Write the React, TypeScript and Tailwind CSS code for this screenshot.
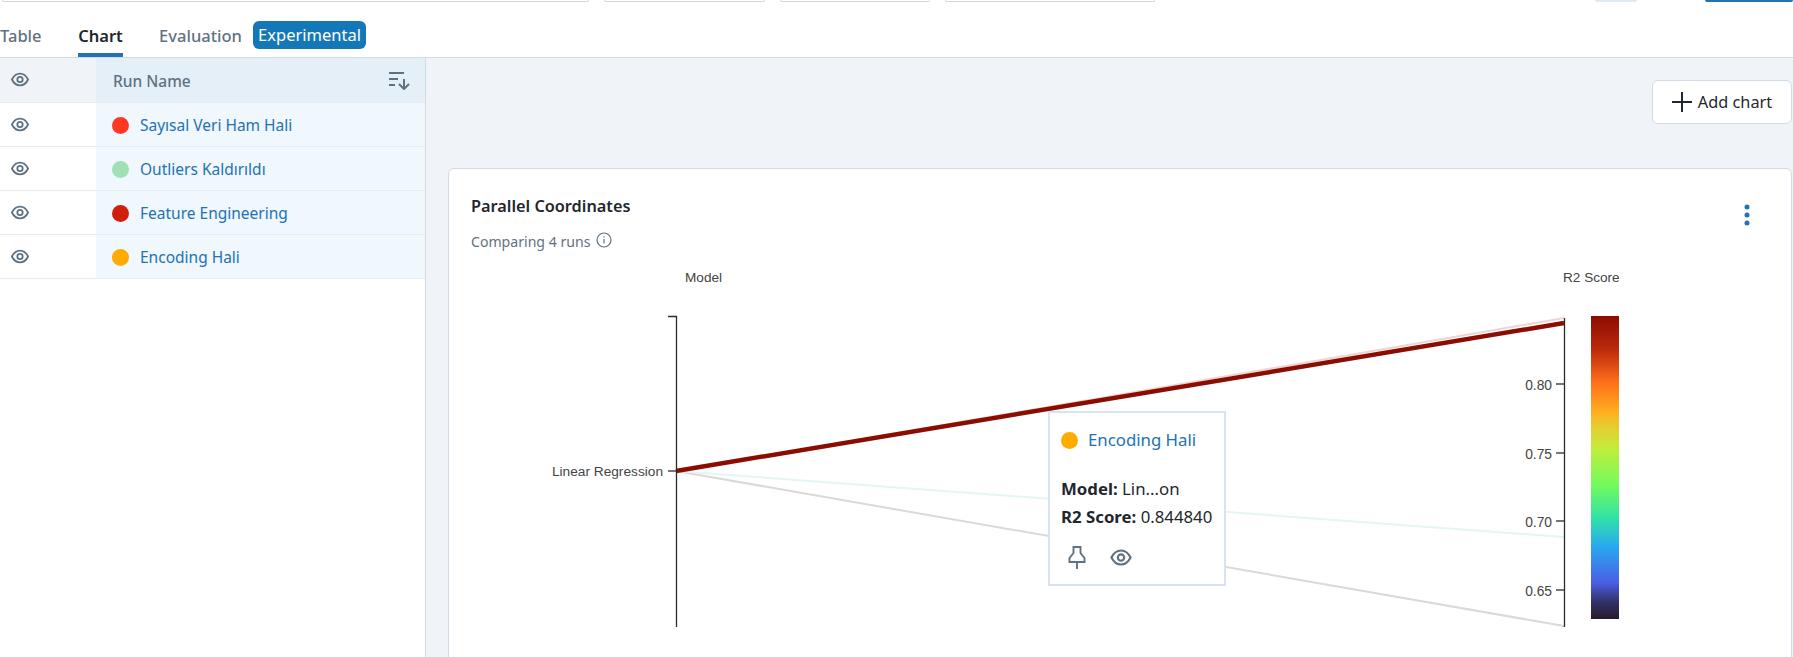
import React from "react";

const font = "font-['Noto_Sans','Open_Sans',sans-serif]";

function Eye({ className = "" }: { className?: string }) {
  return (
    <svg viewBox="0 0 20 16" className={className} fill="none" stroke="#5f7282" strokeWidth="2">
      <path d="M1 8C3 4 6 1.4 10 1.4S17 4 19 8c-2 4-5 6.6-9 6.6S3 12 1 8Z" />
      <circle cx="10" cy="8" r="3" />
    </svg>
  );
}

const runs = [
  { name: "Sayısal Veri Ham Hali", dot: "bg-[#ff3824]" },
  { name: "Outliers Kaldırıldı", dot: "bg-[#9fe0b4]" },
  { name: "Feature Engineering", dot: "bg-[#cf1f0a]" },
  { name: "Encoding Hali", dot: "bg-[#ffab00]" },
];

function Chart() {
  const ticks = [
    { y: 384, t: "0.80" },
    { y: 453, t: "0.75" },
    { y: 521, t: "0.70" },
    { y: 590, t: "0.65" },
  ];
  const stops: [number, string][] = [
    [0, "#8b0c00"],
    [0.11, "#bb2a0c"],
    [0.22, "#ff7018"],
    [0.32, "#ffb020"],
    [0.37, "#e4cf32"],
    [0.44, "#bfee3c"],
    [0.56, "#72fb5e"],
    [0.67, "#2fe0a8"],
    [0.76, "#28aaee"],
    [0.88, "#4a5ee6"],
    [0.94, "#33346e"],
    [1, "#261a2a"],
  ];
  return (
    <svg width="1344" height="405" viewBox="448 255 1344 405" className="block" style={{ fontFamily: "'Liberation Sans', sans-serif" }}>
      <defs>
        <linearGradient id="cb" x1="0" y1="0" x2="0" y2="1">
          {stops.map(([o, c]) => (
            <stop key={o} offset={o} stopColor={c} />
          ))}
        </linearGradient>
      </defs>
      <line x1="676" y1="471" x2="1564" y2="626" stroke="#dcd8d8" strokeWidth="2" />
      <line x1="676" y1="471" x2="1564" y2="537" stroke="#e3f6f5" strokeWidth="2" />
      <line x1="676" y1="471" x2="1564" y2="318" stroke="#eed5d2" strokeWidth="2" />
      <line x1="676" y1="471" x2="1564" y2="323" stroke="#8b0c00" strokeWidth="4.5" />
      <path d="M668 316.5H676.5V627" fill="none" stroke="#2a2a2a" strokeWidth="1.3" />
      <line x1="668" y1="471" x2="676" y2="471" stroke="#2a2a2a" strokeWidth="1.3" />
      <line x1="1564.5" y1="318" x2="1564.5" y2="627" stroke="#2a2a2a" strokeWidth="1.3" />
      {ticks.map((k) => (
        <g key={k.t}>
          <line x1="1556" y1={k.y} x2="1564" y2={k.y} stroke="#2a2a2a" strokeWidth="1.3" />
          <text x="1552" y={k.y + 6} textAnchor="end" fontSize="13.8" fill="#444">{k.t}</text>
        </g>
      ))}
      <text x="663" y="476" textAnchor="end" fontSize="13.7" fill="#444">Linear Regression</text>
      <text x="685" y="282" fontSize="13.6" fill="#444">Model</text>
      <text x="1563" y="282" fontSize="13.6" fill="#444">R2 Score</text>
      <rect x="1591" y="316" width="28" height="303" fill="url(#cb)" />
    </svg>
  );
}

export default function App() {
  return (
    <div className={`${font} w-[1793px] h-[657px] overflow-hidden bg-white flex flex-col text-[#1f272d]`}>
      <div className="h-[2px] flex shrink-0">
        <div className="w-[587px] ml-[2px] border-b border-x border-[#cfd8e0] rounded-b-[4px]" />
        <div className="w-[161px] ml-[15px] border-b border-x border-[#cfd8e0] rounded-b-[4px]" />
        <div className="w-[150px] ml-[15px] border-b border-x border-[#cfd8e0] rounded-b-[4px]" />
        <div className="w-[210px] ml-[15px] border-b border-x border-[#cfd8e0] rounded-b-[4px]" />
        <div className="w-[42px] ml-[440px] bg-[#dfeaf5] rounded-b-[4px]" />
        <div className="w-[88px] ml-[68px] bg-[#2272b4] rounded-b-[4px]" />
      </div>

      <div className="h-[56px] shrink-0 flex items-stretch border-b border-[#cfdbe7] text-[16.5px]">
        <div className="w-[42px] flex items-center pt-[14px] text-[#5f7282] font-medium">Table</div>
        <div className="ml-[36px] w-[45px] relative flex items-center justify-center pt-[14px] font-semibold">
          Chart
          <div className="absolute left-0 right-0 bottom-0 h-[4px] bg-[#2272b4]" />
        </div>
        <div className="ml-[36px] w-[83px] flex items-center justify-center pt-[14px] text-[#5f7282] font-medium whitespace-nowrap">Evaluation</div>
        <div className="ml-[11px] pt-[19px]">
          <span className="h-[28px] w-[113px] flex items-center justify-center rounded-[6px] bg-[#1478b8] text-white">Experimental</span>
        </div>
      </div>

      <div className="flex-1 flex min-h-0">
        <div className="w-[426px] shrink-0 bg-white border-r border-[#cfdbe7]">
          <div className="flex h-[45px] border-b border-[#e4ebf1]">
            <div className="w-[96px] bg-[#f0f4f8] pl-[11px] pt-[14px]">
              <Eye className="w-[18px] h-[15px]" />
            </div>
            <div className="flex-1 bg-[#e5eff7] flex items-center pl-[17px] pr-[15px] justify-between text-[15.5px] font-medium text-[#5f7282]">
              <span className="pt-[3px]">Run Name</span>
              <svg viewBox="0 0 21 19" className="w-[21px] h-[19px]" fill="none" stroke="#5f7282" strokeWidth="2">
                <path d="M0 2h15M0 8h9M0 14h6M15 8v10M10 13l5 5 5-5" />
              </svg>
            </div>
          </div>
          {runs.map((r) => (
            <div key={r.name} className="flex h-[44px] border-b border-[#e4ebf1]">
              <div className="w-[96px] pl-[11px] pt-[14px]">
                <Eye className="w-[18px] h-[15px]" />
              </div>
              <div className="flex-1 bg-[#f0f7fd] flex items-center pl-[16px] pt-[2px] gap-[11px] text-[15.5px] text-[#2272b4]">
                <span className={`w-[17px] h-[17px] rounded-full ${r.dot}`} />
                {r.name}
              </div>
            </div>
          ))}
        </div>

        <div className="flex-1 bg-[#f0f4f8] pl-[22px] pt-[22px] min-w-0">
          <div className="flex justify-end pr-px">
            <button className="w-[140px] h-[44px] bg-white border border-[#cfdbe7] rounded-[6px] flex items-center justify-center gap-[6px] text-[16.3px]">
              <svg viewBox="0 0 20 20" className="w-[20px] h-[20px]" fill="none" stroke="#1f272d" strokeWidth="2">
                <path d="M10 0v20M0 10h20" />
              </svg>
              Add chart
            </button>
          </div>
          <div className="relative mt-[44px] mr-px h-[500px] bg-white border border-[#cfdbe7] rounded-[6px]">
            <div className="flex justify-between pl-[22px] pr-[41px] pt-[26px]">
              <div className="text-[16.3px] font-semibold leading-[22px]">Parallel Coordinates</div>
              <svg viewBox="0 0 6 22" className="w-[6px] h-[22px] mt-[9px]" fill="#2272b4">
                <circle cx="3" cy="3" r="2.5" />
                <circle cx="3" cy="11" r="2.5" />
                <circle cx="3" cy="19" r="2.5" />
              </svg>
            </div>
            <div className="pl-[22px] mt-[3px] flex items-center gap-[6px] text-[14.1px] text-[#5f7282] h-[26px]">
              Comparing 4 runs
              <svg viewBox="0 0 16 16" className="w-[16px] h-[16px] -mt-[4px]" fill="none" stroke="#5f7282" strokeWidth="1.2">
                <circle cx="8" cy="8" r="7" />
                <path d="M8 7v4.5M8 4.2v1.3" />
              </svg>
            </div>
            <div className="-ml-px">
              <Chart />
            </div>
            <div className="absolute left-[599px] top-[242px] w-[178px] h-[175px] bg-white border-2 border-[#d7e3ee] pl-[11px] pt-[17px] text-[16.8px]">
              <div className="flex items-center gap-[10px] text-[#2272b4] h-[20px]">
                <span className="w-[17px] h-[17px] rounded-full bg-[#ffab00]" />
                Encoding Hali
              </div>
              <div className="mt-[25px] leading-[28px] whitespace-nowrap">
                <div><b>Model:</b> Lin...on</div>
                <div><b>R2 Score:</b> 0.844840</div>
              </div>
              <div className="flex items-center mt-[15px] pl-[7px] gap-[24px]">
                <svg viewBox="0 0 18 23" className="w-[18px] h-[23px]" fill="none" stroke="#5f7282" strokeWidth="1.9">
                  <path d="M5.5 1h7v6l4 5v4h-15v-4l4-5V1ZM9 16v7" />
                </svg>
                <Eye className="w-[22px] h-[17px]" />
              </div>
            </div>
          </div>
        </div>
      </div>
    </div>
  );
}
